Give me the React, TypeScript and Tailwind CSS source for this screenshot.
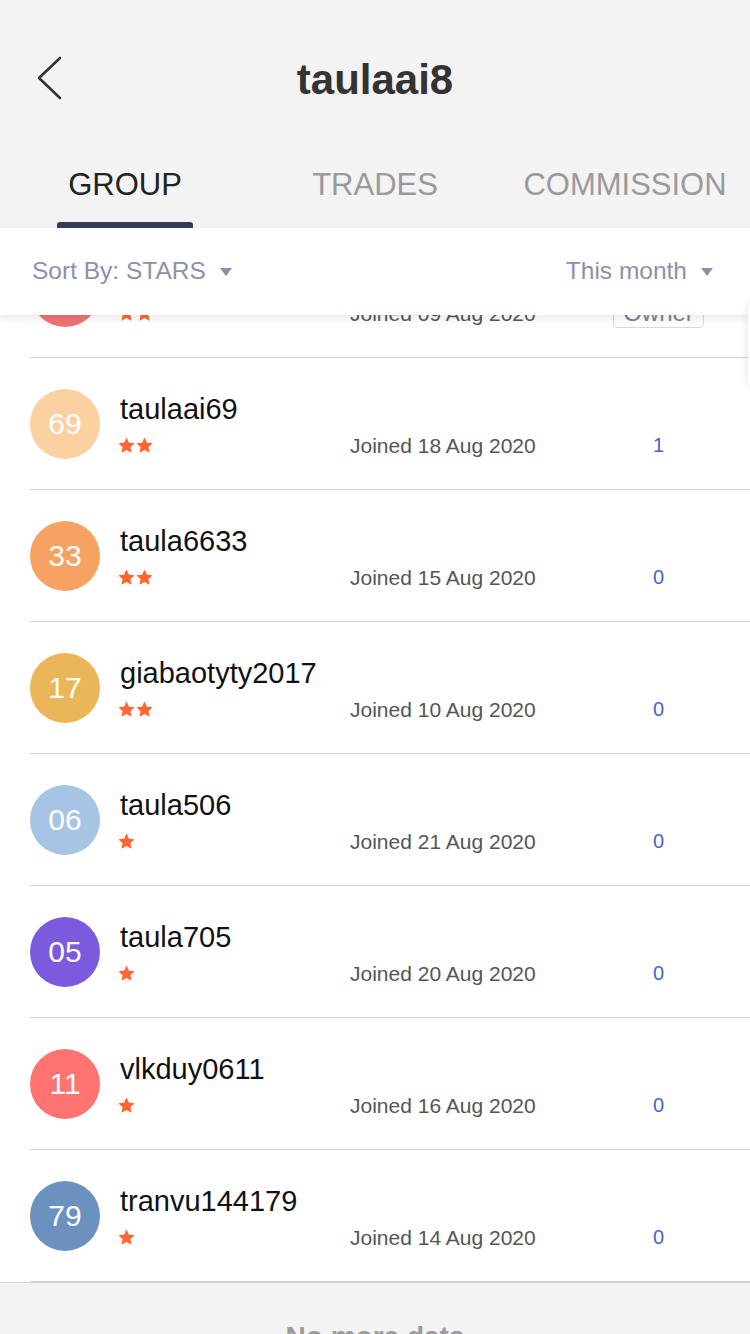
type Member = {
  name: string;
  badge: string;
  color: string;
  stars: number;
  joined: string;
  count?: string;
  owner?: boolean;
};

const members: Member[] = [
  { name: "taulaai8", badge: "08", color: "bg-[#f07272]", stars: 2, joined: "Joined 09 Aug 2020", owner: true },
  { name: "taulaai69", badge: "69", color: "bg-[#fbd1a2]", stars: 2, joined: "Joined 18 Aug 2020", count: "1" },
  { name: "taula6633", badge: "33", color: "bg-[#f5a262]", stars: 2, joined: "Joined 15 Aug 2020", count: "0" },
  { name: "giabaotyty2017", badge: "17", color: "bg-[#ebb65a]", stars: 2, joined: "Joined 10 Aug 2020", count: "0" },
  { name: "taula506", badge: "06", color: "bg-[#a6c4e3]", stars: 1, joined: "Joined 21 Aug 2020", count: "0" },
  { name: "taula705", badge: "05", color: "bg-[#7b5add]", stars: 1, joined: "Joined 20 Aug 2020", count: "0" },
  { name: "vlkduy0611", badge: "11", color: "bg-[#ff7373]", stars: 1, joined: "Joined 16 Aug 2020", count: "0" },
  { name: "tranvu144179", badge: "79", color: "bg-[#6b92be]", stars: 1, joined: "Joined 14 Aug 2020", count: "0" },
];

function Star() {
  return (
    <svg viewBox="0 0 24 24" className="w-[19px] h-[19px] -mr-[1px]">
      <path
        d="M12 1.8l3.1 6.6 7.1.9-5.2 4.9 1.3 7.1L12 17.8l-6.3 3.5 1.3-7.1-5.2-4.9 7.1-.9z"
        fill="#ff6633"
      />
    </svg>
  );
}

function Caret() {
  return (
    <svg viewBox="0 0 12 8" className="w-[12px] h-[8px]">
      <path d="M0 0h12L6 8z" fill="#8a8fa3" />
    </svg>
  );
}

function BackArrow() {
  return (
    <svg viewBox="0 0 30 44" className="absolute left-[34px] top-[56px] w-[30px] h-[44px]">
      <path d="M26 2L5 22l21 20" fill="none" stroke="#333" strokeWidth="2.6" strokeLinecap="round" strokeLinejoin="round" />
    </svg>
  );
}

function MemberRow({ m }: { m: Member }) {
  return (
    <div className="flex h-[132px] pl-[30px]">
      <div className="flex flex-1 items-center border-b border-[#d2d2d2]">
        <div
          className={`w-[70px] h-[70px] shrink-0 rounded-full ${m.color} flex items-center justify-center text-white text-[30px] leading-none`}
        >
          {m.badge}
        </div>
        <div className="flex flex-col self-stretch pt-[34px] ml-[20px]">
          <div className="h-[36px] flex items-center text-[29px] text-[#111]">{m.name}</div>
          <div className="h-[24px] mt-[5px] flex items-center">
            <div className="w-[233px] flex items-center -ml-[3px]">
              {Array.from({ length: m.stars }).map((_, i) => (
                <Star key={i} />
              ))}
            </div>
            <div className="w-[250px] text-[21px] text-[#555] leading-none">{m.joined}</div>
            <div className="w-[117px] flex justify-center">
              {m.owner ? (
                <span className="border border-[#d6d9e4] rounded-[5px] px-[9px] h-[30px] flex items-center text-[24px] text-[#7c8196] leading-none">
                  Owner
                </span>
              ) : (
                <span className="text-[20px] text-[#4a63c9] leading-none">{m.count}</span>
              )}
            </div>
          </div>
        </div>
      </div>
    </div>
  );
}

export default function App() {
  return (
    <div
      className="relative w-[750px] h-[1334px] overflow-hidden bg-white flex flex-col"
      style={{ fontFamily: '"Liberation Sans", Arial, sans-serif' }}
    >
      {/* Header */}
      <div className="bg-[#f3f3f3] shrink-0">
        <div className="h-[160px] flex items-center relative">
          <BackArrow />
          <h1 className="flex-1 text-center text-[42px] font-bold text-[#333] leading-none">taulaai8</h1>
        </div>
        <div className="h-[68px] grid grid-cols-3">
          <div className="flex flex-col items-center">
            <span className="h-[48px] flex items-center text-[31px] text-[#222] leading-none">GROUP</span>
            <div className="mt-auto w-[136px] h-[6px] rounded-t-[3px] bg-[#353c5c]" />
          </div>
          <div className="flex flex-col items-center">
            <span className="h-[48px] flex items-center text-[31px] text-[#9a9a9a] leading-none">TRADES</span>
          </div>
          <div className="flex flex-col items-center">
            <span className="h-[48px] flex items-center text-[31px] text-[#9a9a9a] leading-none">COMMISSION</span>
          </div>
        </div>
      </div>

      {/* Sort bar */}
      <div className="relative z-10 h-[87px] shrink-0 bg-white flex items-center justify-between px-[32px] shadow-[0_4px_8px_rgba(0,0,0,0.08)]">
        <div className="flex items-center gap-[14px] text-[24.5px] text-[#8c91a8]">
          <span>Sort By: STARS</span>
          <Caret />
        </div>
        <div className="flex items-center gap-[14px] pr-[5px] text-[24.5px] text-[#8c91a8]">
          <span>This month</span>
          <Caret />
        </div>
      </div>

      {/* List */}
      <div className="relative flex-1 -mt-[89px]">
        {members.map((m) => (
          <MemberRow key={m.name} m={m} />
        ))}
        <div className="h-[200px] bg-[#f3f3f3] border-t border-[#d2d2d2] flex justify-center pt-[40px]">
          <span className="text-[28px] font-bold text-[#9b9b9b] leading-none">No more data</span>
        </div>
      </div>

      {/* floating edge handle */}
      <div className="absolute z-20 top-[300px] -right-[58px] w-[60px] h-[90px] rounded-[12px] bg-white shadow-[0_0_10px_rgba(0,0,0,0.12)]" />
    </div>
  );
}
